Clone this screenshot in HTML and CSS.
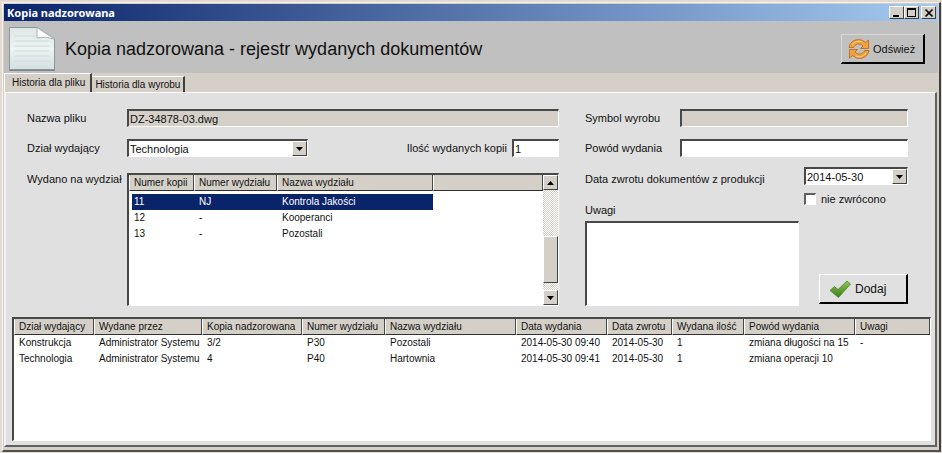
FILE: index.html
```html
<!DOCTYPE html>
<html lang="pl">

<head>
    <meta charset="UTF-8">
    <title>Kopia nadzorowana</title>
    <link rel="stylesheet" href="styles.css">
</head>

<body>
    <div class="window">
        <div class="titlebar">
            <span class="titlebar-text">Kopia nadzorowana</span>
            <button class="win-button" type="button" aria-label="Minimalizuj">
                <svg width="12" height="10" viewBox="0 0 12 10"><path d="M2 7h6v2H2z"/></svg>
            </button>
            <button class="win-button" type="button" aria-label="Maksymalizuj">
                <svg width="12" height="10" viewBox="0 0 12 10"><path d="M1 0h9v9H1zM2 2v6h7V2z" fill-rule="evenodd"/></svg>
            </button>
            <button class="win-button close" type="button" aria-label="Zamknij">
                <svg width="12" height="10" viewBox="0 0 12 10"><path d="M2.500 1.500l7 7M9.500 1.500l-7 7" stroke="#000" stroke-width="1.700"/></svg>
            </button>
        </div>

        <div class="header">
            <svg class="doc-icon" width="48" height="46" viewBox="0 0 48 46">
                <defs>
                    <linearGradient id="paper" x1="0" y1="0" x2="0" y2="1">
                        <stop offset="0" stop-color="#dfe7e7"/>
                        <stop offset="0.5" stop-color="#eef3f3"/>
                        <stop offset="1" stop-color="#d3e0e0"/>
                    </linearGradient>
                </defs>
                <path d="M1.500 1.500H29L46.500 13V43.500H1.500z" fill="url(#paper)" stroke="#8b9696"/>
                <path d="M7 10h21M7 15h34M7 20h34M7 25h34M7 30h34M7 35h34" stroke="#d0dada"/>
                <path d="M29 1.500V12Q37 10 46.500 13z" fill="#fff" stroke="#a9b3b3"/>
                <path d="M1 44.500h46" stroke="#7c8585"/>
            </svg>
            <h1>Kopia nadzorowana - rejestr wydanych dokumentów</h1>
            <button class="button refresh" type="button">
                <svg width="22" height="22" viewBox="0 0 22 22">
                    <g fill="#f3a13c" stroke="#b8650f" stroke-width="0.8" stroke-linejoin="round">
                        <path d="M1 9.500C2 3 9 0 14.500 2.500L17.500 4.500L20.500 2V10.500H12.500L15 8C11.500 4.500 7 6 5.500 9.500z"/>
                        <path d="M21 12.500C20 19 13 22 7.500 19.500L4.500 17.500L1.500 20V11.500H9.500L7 14C10.500 17.500 15 16 16.500 12.500z"/>
                    </g>
                    <path d="M4 7Q8 1.500 14 4M18 15Q14 20.500 8 18" fill="none" stroke="#ffd391"/>
                </svg>
                Odśwież
            </button>
        </div>

        <div class="tabs" role="tablist">
            <button class="tab active" type="button" role="tab" aria-selected="true">Historia dla pliku</button>
            <button class="tab" type="button" role="tab" aria-selected="false">Historia dla wyrobu</button>
        </div>

        <div class="panel">
            <form class="form">
                <div class="form-left">
                    <label for="file-name">Nazwa pliku</label>
                    <input class="field" type="text" id="file-name" value="DZ-34878-03.dwg" readonly>

                    <label for="department">Dział wydający</label>
                    <div class="split">
                        <div class="combo">
                            <select class="field" id="department">
                                <option>Technologia</option>
                            </select>
                            <span class="combo-arrow"><svg width="7" height="4" viewBox="0 0 7 4"><path d="M0 0h7L3.500 4z"/></svg></span>
                        </div>
                        <label class="copies-label" for="copies">Ilość wydanych kopii</label>
                        <input class="field copies" type="text" id="copies" value="1">
                    </div>

                    <span class="top-label" id="issued-label">Wydano na wydział</span>
                    <div class="list issued">
                        <table aria-labelledby="issued-label">
                            <colgroup>
                                <col class="w-65">
                                <col class="w-83">
                                <col class="w-156">
                                <col>
                            </colgroup>
                            <thead>
                                <tr><th>Numer kopii</th><th>Numer wydziału</th><th>Nazwa wydziału</th><th></th></tr>
                            </thead>
                            <tbody>
                                <tr class="selected"><td>11</td><td>NJ</td><td>Kontrola Jakości</td></tr>
                                <tr><td>12</td><td>-</td><td>Kooperanci</td></tr>
                                <tr><td>13</td><td>-</td><td>Pozostali</td></tr>
                            </tbody>
                        </table>
                        <div class="scrollbar">
                            <span class="scroll-button"><svg width="7" height="4" viewBox="0 0 7 4"><path d="M0 4h7L3.500 0z"/></svg></span>
                            <span class="scroll-thumb"></span>
                            <span class="scroll-button"><svg width="7" height="4" viewBox="0 0 7 4"><path d="M0 0h7L3.500 4z"/></svg></span>
                        </div>
                    </div>
                </div>

                <div class="form-right">
                    <div class="row">
                        <label for="symbol">Symbol wyrobu</label>
                        <input class="field wide" type="text" id="symbol" readonly>
                    </div>
                    <div class="row">
                        <label for="reason">Powód wydania</label>
                        <input class="field wide" type="text" id="reason">
                    </div>
                    <div class="row date-row">
                        <label for="return-date">Data zwrotu dokumentów z produkcji</label>
                        <div class="combo date">
                            <select class="field" id="return-date">
                                <option>2014-05-30</option>
                            </select>
                            <span class="combo-arrow"><svg width="7" height="4" viewBox="0 0 7 4"><path d="M0 0h7L3.500 4z"/></svg></span>
                        </div>
                    </div>
                    <div class="row check-row">
                        <label class="notes-label" for="notes">Uwagi</label>
                        <label class="check"><input type="checkbox"> nie zwrócono</label>
                    </div>
                    <div class="notes-row">
                        <textarea class="field" id="notes"></textarea>
                        <button class="button add" type="button">
                            <svg width="22" height="20" viewBox="0 0 22 20">
                                <defs>
                                    <linearGradient id="green" x1="0" y1="0" x2="0" y2="1">
                                        <stop offset="0" stop-color="#8fc653"/>
                                        <stop offset="1" stop-color="#3d7d1b"/>
                                    </linearGradient>
                                </defs>
                                <path d="M1 11.500L5.500 7.500L9 10.500L18 2L21.500 5L9.500 18.500z" fill="url(#green)" stroke="#4b8226" stroke-width="0.8" stroke-linejoin="round"/>
                            </svg>
                            Dodaj
                        </button>
                    </div>
                </div>
            </form>

            <div class="list history">
                <table>
                    <colgroup>
                        <col class="w-80">
                        <col class="w-108">
                        <col class="w-100">
                        <col class="w-83">
                        <col class="w-131">
                        <col class="w-91">
                        <col class="w-65">
                        <col class="w-72">
                        <col class="w-111">
                        <col>
                    </colgroup>
                    <thead>
                        <tr>
                            <th>Dział wydający</th>
                            <th>Wydane przez</th>
                            <th>Kopia nadzorowana</th>
                            <th>Numer wydziału</th>
                            <th>Nazwa wydziału</th>
                            <th>Data wydania</th>
                            <th>Data zwrotu</th>
                            <th>Wydana ilość</th>
                            <th>Powód wydania</th>
                            <th>Uwagi</th>
                        </tr>
                    </thead>
                    <tbody>
                        <tr>
                            <td>Konstrukcja</td>
                            <td>Administrator Systemu</td>
                            <td>3/2</td>
                            <td>P30</td>
                            <td>Pozostali</td>
                            <td>2014-05-30 09:40</td>
                            <td>2014-05-30</td>
                            <td>1</td>
                            <td>zmiana długości na 15</td>
                            <td>-</td>
                        </tr>
                        <tr>
                            <td>Technologia</td>
                            <td>Administrator Systemu</td>
                            <td>4</td>
                            <td>P40</td>
                            <td>Hartownia</td>
                            <td>2014-05-30 09:41</td>
                            <td>2014-05-30</td>
                            <td>1</td>
                            <td>zmiana operacji 10</td>
                            <td></td>
                        </tr>
                    </tbody>
                </table>
            </div>
        </div>
    </div>
</body>

</html>
```
FILE: styles.css
```css
* {
    box-sizing: border-box;
}

body {
    margin: 0;
    padding: 2px 1px 1px 2px;
    height: 100vh;
    display: flex;
    background-color: #e2dad2;
    color: #111;
    font-family: "Liberation Sans", Arial, sans-serif;
    font-size: 10px;
}

input, select, textarea, button {
    font: inherit;
    color: inherit;
    border-radius: 0;
}

.window {
    flex: 1;
    min-width: 0;
    display: flex;
    flex-direction: column;
    padding: 1px;
    background-color: #d4d0c8;
    border: 1px solid #f4f2ee;
    border-right: 2px solid #404040;
    border-bottom: 2px solid #505050;
}

/* title bar */

.titlebar {
    display: flex;
    align-items: center;
    height: 17px;
    padding: 0 2px 0 3px;
    background: linear-gradient(to right, #0a246a, #a6caf0);
}

.titlebar-text {
    flex: 1;
    color: #fff;
    font-family: "Noto Sans", Tahoma, sans-serif;
    font-size: 11px;
    font-weight: bold;
    line-height: 16px;
}

.win-button {
    display: flex;
    align-items: center;
    justify-content: center;
    width: 15px;
    height: 13px;
    padding: 0;
    background-color: #d4d0c8;
    border: 1px solid #fff;
    border-right-color: #404040;
    border-bottom-color: #404040;
}

.win-button.close {
    margin-left: 2px;
}

/* header */

.header {
    display: flex;
    align-items: center;
    height: 52px;
    padding: 4px 13px 0 4px;
    background-color: #c0c0c0;
}

.header h1 {
    flex: 1;
    margin: 0 0 0 9px;
    font-size: 18px;
    font-weight: normal;
}

.button {
    display: flex;
    align-items: center;
    height: 30px;
    background-color: #e0e0e0;
    border: 1px solid #fff;
    border-right: 2px solid #000;
    border-bottom: 2px solid #000;
}

.button.refresh {
    width: 84px;
    gap: 3px;
    padding: 0 0 0 6px;
    font-size: 11px;
    background-color: #c0c0c0;
    border-top-color: #d8d8d8;
    border-left-color: #d8d8d8;
}

/* tabs */

.tabs {
    display: flex;
    align-items: flex-end;
    height: 19px;
}

.tab {
    height: 16px;
    padding: 0 3px;
    background-color: #d4d0c8;
    border: 0;
    border-top: 1px solid #fff;
    border-right: 2px solid #404040;
}

.tab.active {
    height: 19px;
    padding: 0 5px 1px 7px;
    border-left: 1px solid #fff;
}

.panel {
    flex: 1;
    display: flex;
    flex-direction: column;
    margin: 0 1px 2px 0;
    padding: 16px 4px 4px 6px;
    background-color: #e0e0e0;
    border-top: 1px solid #fff;
    border-left: 2px solid #f4f2ee;
    border-right: 2px solid #606060;
    border-bottom: 2px solid #606060;
}

/* form */

.form {
    display: flex;
    gap: 26px;
    padding: 0 23px 0 15px;
    font-size: 11px;
}

.field {
    width: 100%;
    height: 18px;
    margin: 0;
    padding: 0 1px;
    background-color: #fff;
    border: 2px solid #484848;
    border-right: 1px solid #fff;
    border-bottom: 1px solid #fff;
    outline: 0;
    appearance: none;
}

.field[readonly] {
    background-color: #d4d0c8;
}

.form-left {
    flex: 1;
    min-width: 0;
    display: grid;
    grid-template-columns: 100px 1fr;
    grid-template-rows: 18px 18px 137px;
    row-gap: 12px;
    align-items: center;
}

.form-right {
    width: 323px;
}

.split {
    display: flex;
    align-items: center;
    justify-content: space-between;
}

.copies-label {
    margin-left: auto;
    margin-right: 5px;
}

.field.copies {
    width: 47px;
}

.combo {
    position: relative;
    width: 181px;
}

.combo .field {
    display: block;
}

.combo-arrow {
    position: absolute;
    top: 2px;
    right: 1px;
    bottom: 1px;
    width: 15px;
    display: flex;
    align-items: center;
    justify-content: center;
    background-color: #d4d0c8;
    border: 1px solid #fff;
    border-right-color: #404040;
    border-bottom-color: #404040;
    pointer-events: none;
}

.combo.date {
    width: 104px;
}

.top-label {
    align-self: start;
    margin-top: 4px;
}

.row {
    display: flex;
    align-items: center;
    justify-content: space-between;
    height: 18px;
    margin-bottom: 12px;
}

.field.wide {
    width: 228px;
}

.row.date-row {
    height: 24px;
    margin-top: -2px;
    margin-bottom: 2px;
}

.date-row .combo {
    align-self: flex-start;
}

.row.check-row {
    height: 28px;
    margin-bottom: 0;
    align-items: flex-start;
}

.notes-label {
    align-self: flex-end;
    margin-bottom: 5px;
}

.check {
    display: flex;
    align-items: center;
    gap: 5px;
    width: 104px;
}

.check input {
    width: 12px;
    height: 12px;
    margin: 0;
    appearance: none;
    background-color: #fff;
    border: 2px solid #606060;
    border-right: 1px solid #fff;
    border-bottom: 1px solid #fff;
}

.notes-row {
    display: flex;
    align-items: flex-end;
    justify-content: space-between;
}

.notes-row textarea {
    width: 214px;
    height: 85px;
    resize: none;
}

.button.add {
    width: 89px;
    gap: 4px;
    padding: 0 0 0 9px;
    margin-bottom: 2px;
    font-size: 12px;
}

/* lists */

.list {
    display: flex;
    background-color: #fff;
    border: 2px solid #484848;
    border-right: 1px solid #fff;
    border-bottom: 1px solid #fff;
    font-size: 10px;
}

.list table {
    flex: 1;
    width: 100%;
    align-self: flex-start;
    table-layout: fixed;
    border-spacing: 0;
}

.list th {
    height: 16px;
    padding: 0 0 0 4px;
    text-align: left;
    font-weight: normal;
    line-height: 15px;
    white-space: nowrap;
    background-color: #d4d0c8;
    border-left: 1px solid #fff;
    border-right: 1px solid #484848;
    border-bottom: 1px solid #303030;
}

.list td {
    height: 16px;
    padding: 0 0 0 5px;
    line-height: 16px;
    white-space: nowrap;
}

.issued {
    height: 133px;
    align-self: end;
}

.issued tbody::before {
    content: "";
    display: block;
    height: 3px;
}

.issued td:first-child {
    padding-left: 2px;
    border-left: 3px solid #fff;
}

.issued .selected td {
    color: #fff;
    background-color: #0a246a;
}

.history {
    flex: 1;
    margin-top: 11px;
}

.w-65 { width: 65px; }
.w-72 { width: 72px; }
.w-80 { width: 80px; }
.w-83 { width: 83px; }
.w-91 { width: 91px; }
.w-100 { width: 100px; }
.w-108 { width: 108px; }
.w-111 { width: 111px; }
.w-131 { width: 131px; }
.w-156 { width: 156px; }

.scrollbar {
    display: flex;
    flex-direction: column;
    width: 15px;
    background: repeating-conic-gradient(#d4d0c8 0 25%, #fff 0 50%) 0 0 / 2px 2px;
}

.scroll-button, .scroll-thumb {
    background-color: #d4d0c8;
    border: 1px solid #fff;
    border-right-color: #404040;
    border-bottom-color: #404040;
}

.scroll-button {
    height: 15px;
    display: flex;
    align-items: center;
    justify-content: center;
}

.scroll-thumb {
    height: 47px;
    margin-top: auto;
    margin-bottom: 7px;
}
```
